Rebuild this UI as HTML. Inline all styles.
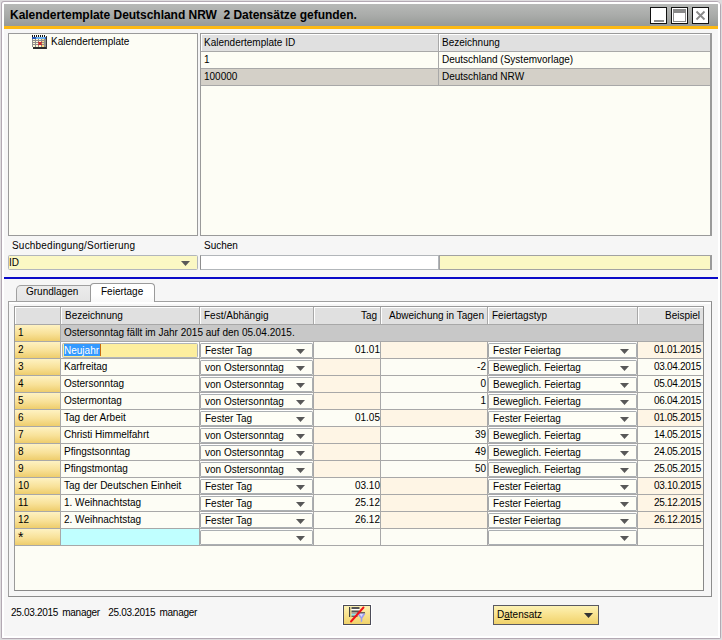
<!DOCTYPE html>
<html lang="de"><head><meta charset="utf-8"><title>Kalendertemplate Deutschland NRW</title>
<style>
html,body{margin:0;padding:0}
body{width:722px;height:640px;overflow:hidden;background:#fff;position:relative;
 font-family:"Liberation Sans",sans-serif;font-size:10px;line-height:17px;color:#000}
div,span{position:absolute;box-sizing:border-box;white-space:nowrap}
.t{height:17px}
.r{text-align:right}
.arr{width:9px;height:5px;background:#585858;clip-path:polygon(0 0,100% 0,50% 100%)}
.rn{left:15px;width:45px;height:16px;background:linear-gradient(#fef2c2,#f8e198 55%,#eecd6c);padding-left:3px;line-height:15px}
.hl{height:1px;background:#a8a8a8}
.vl{width:1px;background:#a8a8a8}
.cb{height:15px;background:#fefef6;border:1px solid #abafb2;border-left-color:#a6a8aa;border-radius:1.5px;box-shadow:0 -1px 0 #fff}
.pe{background:#fef5e5}
.hd{background:#e0e0e0;border-top:1px solid #fff;border-left:1px solid #fff;height:17px;line-height:15px}
.wb{width:17px;height:17px;top:7px;background:#fff;border:1px solid #111}
</style></head><body>

<div style="left:0;top:0;width:722px;height:640px;background:#dedcde"></div>
<div style="left:1px;top:1px;width:720px;height:638px;background:#b3a9b3;border-radius:3px 5px 2px 2px"></div>
<div style="left:2px;top:2px;width:718px;height:636px;background:#fff;border-radius:2px 3px 0 0"></div>
<div style="left:4px;top:4px;width:714px;height:632px;background:#f6f6f6"></div>
<div style="left:4px;top:4px;width:714px;height:22px;background:linear-gradient(#b7b9b7,#aaacaa 50%,#979a97)"></div>
<div style="left:4px;top:26px;width:714px;height:3px;background:#fdb913"></div>
<div style="left:10px;top:5px;height:20px;line-height:20px;font-size:12px;font-weight:bold;letter-spacing:-0.03px">Kalendertemplate Deutschland NRW&nbsp; 2 Datens&auml;tze gefunden.</div>
<div class="wb" style="left:650px"><div style="left:3px;top:12px;width:10px;height:2px;background:#8a8a8a"></div></div>
<div class="wb" style="left:671px"><div style="left:1px;top:1px;width:13px;height:13px;border:1px solid #8a8a8a;border-top:4px solid #8a8a8a;background:#fff"></div></div>
<div class="wb" style="left:692px"><svg style="position:absolute;left:0;top:0" width="15" height="15" viewBox="0 0 15 15"><path d="M3.5 3.5 L11.5 11.5 M11.5 3.5 L3.5 11.5" stroke="#8a8a8a" stroke-width="1.8" fill="none"/></svg></div>
<div style="left:8px;top:33px;width:190px;height:203px;background:#fdfdf5;border:1px solid #9a9a9a"></div>
<svg style="position:absolute;left:32px;top:35px" width="15" height="14" viewBox="0 0 15 14" shape-rendering="crispEdges">
<rect x="1" y="12" width="14" height="2" fill="#2c2c2c"/>
<rect x="14" y="1" width="1" height="13" fill="#3a3a3a"/>
<rect x="0" y="2" width="14" height="10" fill="#8e8e8e"/>
<rect x="0" y="2" width="4" height="2" fill="#2858b8"/>
<rect x="4" y="2" width="9" height="2" fill="#6cb0f0"/>
<rect x="13" y="2" width="1" height="2" fill="#3060c0"/>
<rect x="0" y="0" width="1" height="2" fill="#111"/><rect x="2" y="0" width="1" height="2" fill="#111"/><rect x="4" y="0" width="1" height="2" fill="#111"/><rect x="6" y="0" width="1" height="2" fill="#111"/><rect x="8" y="0" width="1" height="2" fill="#111"/><rect x="10" y="0" width="1" height="2" fill="#111"/><rect x="12" y="0" width="1" height="2" fill="#111"/>
<rect x="1" y="4" width="2" height="1" fill="#fff8d4"/><rect x="1" y="6" width="2" height="1" fill="#fff8d4"/><rect x="1" y="8" width="2" height="1" fill="#fff8d4"/><rect x="1" y="10" width="2" height="1.5" fill="#fff8d4"/><rect x="4" y="4" width="2" height="1" fill="#fff8d4"/><rect x="4" y="6" width="2" height="1" fill="#fff8d4"/><rect x="4" y="8" width="2" height="1" fill="#fff8d4"/><rect x="4" y="10" width="2" height="1.5" fill="#fff8d4"/><rect x="7" y="4" width="2" height="1" fill="#fff8d4"/><rect x="7" y="6" width="2" height="1" fill="#fff8d4"/><rect x="7" y="8" width="2" height="1" fill="#fff8d4"/><rect x="7" y="10" width="2" height="1.5" fill="#fff8d4"/><rect x="10" y="4" width="2" height="1" fill="#ffdf80"/><rect x="10" y="6" width="2" height="1" fill="#ffdf80"/><rect x="10" y="8" width="2" height="1" fill="#ffdf80"/><rect x="10" y="10" width="2" height="1.5" fill="#ffdf80"/>
<path d="M6.3 7L9.7 10M9.7 7L6.3 10" stroke="#d81818" stroke-width="1.1" shape-rendering="auto"/>
</svg>
<div class="t" style="left:51px;top:33px">Kalendertemplate</div>
<div style="left:200px;top:33px;width:512px;height:203px;background:#fdfdf5;border:1px solid #9a9a9a;border-right:2px solid #9a9a9a"></div>
<div class="hd" style="left:201px;top:34px;width:237px;padding-left:2px">Kalendertemplate ID</div>
<div class="hd" style="left:439px;top:34px;width:271px;padding-left:2px">Bezeichnung</div>
<div style="left:201px;top:69px;width:509px;height:16px;background:#d4d0c8"></div>
<div class="hl" style="left:201px;top:51px;width:509px"></div>
<div class="hl" style="left:201px;top:68px;width:509px"></div>
<div class="hl" style="left:201px;top:85px;width:509px"></div>
<div class="vl" style="left:438px;top:34px;height:52px"></div>
<div class="t" style="left:204px;top:51px">1</div>
<div class="t" style="left:442px;top:51px">Deutschland (Systemvorlage)</div>
<div class="t" style="left:204px;top:68px">100000</div>
<div class="t" style="left:442px;top:68px">Deutschland NRW</div>
<div class="t" style="left:12px;top:237px;letter-spacing:0.2px">Suchbedingung/Sortierung</div>
<div class="t" style="left:204px;top:237px">Suchen</div>
<div style="left:8px;top:255px;width:190px;height:15px;background:#fbf8c4;border:1px solid #b2b6bc;border-radius:1.5px"></div>
<div class="t" style="left:9px;top:254px">ID</div>
<div class="arr" style="left:181px;top:261px"></div>
<div style="left:200px;top:255px;width:239px;height:15px;background:#fff;border:1px solid #b2b6ba;border-left:1px solid #8e8e8e"></div>
<div style="left:439px;top:255px;width:273px;height:15px;background:#fbf8c4;border:1px solid #a2a2a2;border-right:2px solid #9a9a9a"></div>
<div style="left:4px;top:277px;width:714px;height:2px;background:#0a0ac8"></div>
<div style="left:8px;top:301px;width:704px;height:296px;background:#f6f6f6;border:1px solid #8c8c8c;border-top-color:#a0a0a0;border-left-color:#a0a0a0"></div>
<div style="left:9px;top:302px;width:702px;height:2px;background:#fff"></div>
<div style="left:16px;top:285px;width:75px;height:16px;background:linear-gradient(#ececec,#e4e4e4);border:1px solid #a0a0a0;border-bottom:none;border-radius:5px 0 0 0"></div>
<div class="t" style="left:26px;top:283px">Grundlagen</div>
<div style="left:90px;top:283px;width:65px;height:19px;background:linear-gradient(#fff 60%,#f8f8f8);border:1px solid #9a9a9a;border-bottom:none;border-radius:4px 4px 0 0"></div>
<div class="t" style="left:101px;top:283px">Feiertage</div>
<div style="left:14px;top:306px;width:690px;height:285px;background:#fdfdf5;border:1px solid #9a9a9a;border-right-color:#888;border-bottom-color:#888"></div>
<div class="hd" style="left:15px;top:307px;width:45px;padding-left:3px"></div>
<div class="hd" style="left:61px;top:307px;width:138px;padding-left:3px">Bezeichnung</div>
<div class="hd" style="left:200px;top:307px;width:113px;padding-left:3px">Fest/Abh&auml;ngig</div>
<div class="hd" style="left:314px;top:307px;width:66px;padding-right:3px;text-align:right">Tag</div>
<div class="hd" style="left:381px;top:307px;width:106px;padding-right:3px;text-align:right">Abweichung in Tagen</div>
<div class="hd" style="left:488px;top:307px;width:149px;padding-left:3px">Feiertagstyp</div>
<div class="hd" style="left:638px;top:307px;width:65px;padding-right:3px;text-align:right">Beispiel</div>
<div style="left:61px;top:325px;width:642px;height:16px;background:#c8c8c8"></div>
<div class="hl" style="left:15px;top:324px;width:688px"></div>
<div class="hl" style="left:15px;top:341px;width:688px"></div>
<div class="hl" style="left:15px;top:358px;width:688px"></div>
<div class="hl" style="left:15px;top:375px;width:688px"></div>
<div class="hl" style="left:15px;top:392px;width:688px"></div>
<div class="hl" style="left:15px;top:409px;width:688px"></div>
<div class="hl" style="left:15px;top:426px;width:688px"></div>
<div class="hl" style="left:15px;top:443px;width:688px"></div>
<div class="hl" style="left:15px;top:460px;width:688px"></div>
<div class="hl" style="left:15px;top:477px;width:688px"></div>
<div class="hl" style="left:15px;top:494px;width:688px"></div>
<div class="hl" style="left:15px;top:511px;width:688px"></div>
<div class="hl" style="left:15px;top:528px;width:688px"></div>
<div class="hl" style="left:15px;top:545px;width:688px"></div>
<div class="vl" style="left:60px;top:307px;height:239px"></div>
<div class="vl" style="left:199px;top:307px;height:18px"></div>
<div class="vl" style="left:199px;top:342px;height:204px"></div>
<div class="vl" style="left:313px;top:307px;height:18px"></div>
<div class="vl" style="left:313px;top:342px;height:204px"></div>
<div class="vl" style="left:380px;top:307px;height:18px"></div>
<div class="vl" style="left:380px;top:342px;height:204px"></div>
<div class="vl" style="left:487px;top:307px;height:18px"></div>
<div class="vl" style="left:487px;top:342px;height:204px"></div>
<div class="vl" style="left:637px;top:307px;height:18px"></div>
<div class="vl" style="left:637px;top:342px;height:204px"></div>
<div class="rn" style="top:325px">1</div>
<div class="t" style="left:64px;top:324px">Ostersonntag f&auml;llt im Jahr 2015 auf den 05.04.2015.</div>
<div class="rn" style="top:342px">2</div>
<div style="left:61px;top:342px;width:138px;height:16px;background:#fff"></div>
<div style="left:62px;top:343px;width:136px;height:15px;background:#fdee9e;border:1px solid #b0b4b8;border-radius:1.5px"></div>
<div style="left:64px;top:344px;width:37px;height:12px;background:#3399ff"></div>
<div style="left:100px;top:344px;width:1px;height:12px;background:#c86a10"></div>
<div class="t" style="left:64px;top:342px;color:#fff">Neujahr</div>
<div class="cb" style="left:200px;top:343px;width:113px"></div>
<div class="t" style="left:205px;top:342px">Fester Tag</div>
<div class="arr" style="left:296px;top:349px"></div>
<div class="t r" style="left:314px;width:66px;top:341px">01.01</div>
<div class="pe" style="left:381px;top:342px;width:106px;height:16px"></div>
<div class="cb" style="left:488px;top:343px;width:149px"></div>
<div class="t" style="left:493px;top:342px">Fester Feiertag</div>
<div class="arr" style="left:620px;top:349px"></div>
<div class="pe" style="left:638px;top:342px;width:65px;height:16px"></div>
<div class="t r" style="left:638px;width:63px;top:341px;letter-spacing:-0.3px">01.01.2015</div>
<div class="rn" style="top:359px">3</div>
<div class="t" style="left:64px;top:358px">Karfreitag</div>
<div class="cb" style="left:200px;top:360px;width:113px"></div>
<div class="t" style="left:205px;top:359px">von Ostersonntag</div>
<div class="arr" style="left:296px;top:366px"></div>
<div class="pe" style="left:314px;top:359px;width:66px;height:16px"></div>
<div class="t r" style="left:381px;width:105px;top:358px">-2</div>
<div class="cb" style="left:488px;top:360px;width:149px"></div>
<div class="t" style="left:493px;top:359px">Beweglich. Feiertag</div>
<div class="arr" style="left:620px;top:366px"></div>
<div class="t r" style="left:638px;width:63px;top:358px;letter-spacing:-0.3px">03.04.2015</div>
<div class="rn" style="top:376px">4</div>
<div class="t" style="left:64px;top:375px">Ostersonntag</div>
<div class="cb" style="left:200px;top:377px;width:113px"></div>
<div class="t" style="left:205px;top:376px">von Ostersonntag</div>
<div class="arr" style="left:296px;top:383px"></div>
<div class="pe" style="left:314px;top:376px;width:66px;height:16px"></div>
<div class="t r" style="left:381px;width:105px;top:375px">0</div>
<div class="cb" style="left:488px;top:377px;width:149px"></div>
<div class="t" style="left:493px;top:376px">Beweglich. Feiertag</div>
<div class="arr" style="left:620px;top:383px"></div>
<div class="t r" style="left:638px;width:63px;top:375px;letter-spacing:-0.3px">05.04.2015</div>
<div class="rn" style="top:393px">5</div>
<div class="t" style="left:64px;top:392px">Ostermontag</div>
<div class="cb" style="left:200px;top:394px;width:113px"></div>
<div class="t" style="left:205px;top:393px">von Ostersonntag</div>
<div class="arr" style="left:296px;top:400px"></div>
<div class="pe" style="left:314px;top:393px;width:66px;height:16px"></div>
<div class="t r" style="left:381px;width:105px;top:392px">1</div>
<div class="cb" style="left:488px;top:394px;width:149px"></div>
<div class="t" style="left:493px;top:393px">Beweglich. Feiertag</div>
<div class="arr" style="left:620px;top:400px"></div>
<div class="t r" style="left:638px;width:63px;top:392px;letter-spacing:-0.3px">06.04.2015</div>
<div class="rn" style="top:410px">6</div>
<div class="t" style="left:64px;top:409px">Tag der Arbeit</div>
<div class="cb" style="left:200px;top:411px;width:113px"></div>
<div class="t" style="left:205px;top:410px">Fester Tag</div>
<div class="arr" style="left:296px;top:417px"></div>
<div class="t r" style="left:314px;width:66px;top:409px">01.05</div>
<div class="pe" style="left:381px;top:410px;width:106px;height:16px"></div>
<div class="cb" style="left:488px;top:411px;width:149px"></div>
<div class="t" style="left:493px;top:410px">Fester Feiertag</div>
<div class="arr" style="left:620px;top:417px"></div>
<div class="pe" style="left:638px;top:410px;width:65px;height:16px"></div>
<div class="t r" style="left:638px;width:63px;top:409px;letter-spacing:-0.3px">01.05.2015</div>
<div class="rn" style="top:427px">7</div>
<div class="t" style="left:64px;top:426px">Christi Himmelfahrt</div>
<div class="cb" style="left:200px;top:428px;width:113px"></div>
<div class="t" style="left:205px;top:427px">von Ostersonntag</div>
<div class="arr" style="left:296px;top:434px"></div>
<div class="pe" style="left:314px;top:427px;width:66px;height:16px"></div>
<div class="t r" style="left:381px;width:105px;top:426px">39</div>
<div class="cb" style="left:488px;top:428px;width:149px"></div>
<div class="t" style="left:493px;top:427px">Beweglich. Feiertag</div>
<div class="arr" style="left:620px;top:434px"></div>
<div class="t r" style="left:638px;width:63px;top:426px;letter-spacing:-0.3px">14.05.2015</div>
<div class="rn" style="top:444px">8</div>
<div class="t" style="left:64px;top:443px">Pfingstsonntag</div>
<div class="cb" style="left:200px;top:445px;width:113px"></div>
<div class="t" style="left:205px;top:444px">von Ostersonntag</div>
<div class="arr" style="left:296px;top:451px"></div>
<div class="pe" style="left:314px;top:444px;width:66px;height:16px"></div>
<div class="t r" style="left:381px;width:105px;top:443px">49</div>
<div class="cb" style="left:488px;top:445px;width:149px"></div>
<div class="t" style="left:493px;top:444px">Beweglich. Feiertag</div>
<div class="arr" style="left:620px;top:451px"></div>
<div class="t r" style="left:638px;width:63px;top:443px;letter-spacing:-0.3px">24.05.2015</div>
<div class="rn" style="top:461px">9</div>
<div class="t" style="left:64px;top:460px">Pfingstmontag</div>
<div class="cb" style="left:200px;top:462px;width:113px"></div>
<div class="t" style="left:205px;top:461px">von Ostersonntag</div>
<div class="arr" style="left:296px;top:468px"></div>
<div class="pe" style="left:314px;top:461px;width:66px;height:16px"></div>
<div class="t r" style="left:381px;width:105px;top:460px">50</div>
<div class="cb" style="left:488px;top:462px;width:149px"></div>
<div class="t" style="left:493px;top:461px">Beweglich. Feiertag</div>
<div class="arr" style="left:620px;top:468px"></div>
<div class="t r" style="left:638px;width:63px;top:460px;letter-spacing:-0.3px">25.05.2015</div>
<div class="rn" style="top:478px">10</div>
<div class="t" style="left:64px;top:477px">Tag der Deutschen Einheit</div>
<div class="cb" style="left:200px;top:479px;width:113px"></div>
<div class="t" style="left:205px;top:478px">Fester Tag</div>
<div class="arr" style="left:296px;top:485px"></div>
<div class="t r" style="left:314px;width:66px;top:477px">03.10</div>
<div class="pe" style="left:381px;top:478px;width:106px;height:16px"></div>
<div class="cb" style="left:488px;top:479px;width:149px"></div>
<div class="t" style="left:493px;top:478px">Fester Feiertag</div>
<div class="arr" style="left:620px;top:485px"></div>
<div class="pe" style="left:638px;top:478px;width:65px;height:16px"></div>
<div class="t r" style="left:638px;width:63px;top:477px;letter-spacing:-0.3px">03.10.2015</div>
<div class="rn" style="top:495px">11</div>
<div class="t" style="left:64px;top:494px">1. Weihnachtstag</div>
<div class="cb" style="left:200px;top:496px;width:113px"></div>
<div class="t" style="left:205px;top:495px">Fester Tag</div>
<div class="arr" style="left:296px;top:502px"></div>
<div class="t r" style="left:314px;width:66px;top:494px">25.12</div>
<div class="pe" style="left:381px;top:495px;width:106px;height:16px"></div>
<div class="cb" style="left:488px;top:496px;width:149px"></div>
<div class="t" style="left:493px;top:495px">Fester Feiertag</div>
<div class="arr" style="left:620px;top:502px"></div>
<div class="pe" style="left:638px;top:495px;width:65px;height:16px"></div>
<div class="t r" style="left:638px;width:63px;top:494px;letter-spacing:-0.3px">25.12.2015</div>
<div class="rn" style="top:512px">12</div>
<div class="t" style="left:64px;top:511px">2. Weihnachtstag</div>
<div class="cb" style="left:200px;top:513px;width:113px"></div>
<div class="t" style="left:205px;top:512px">Fester Tag</div>
<div class="arr" style="left:296px;top:519px"></div>
<div class="t r" style="left:314px;width:66px;top:511px">26.12</div>
<div class="pe" style="left:381px;top:512px;width:106px;height:16px"></div>
<div class="cb" style="left:488px;top:513px;width:149px"></div>
<div class="t" style="left:493px;top:512px">Fester Feiertag</div>
<div class="arr" style="left:620px;top:519px"></div>
<div class="pe" style="left:638px;top:512px;width:65px;height:16px"></div>
<div class="t r" style="left:638px;width:63px;top:511px;letter-spacing:-0.3px">26.12.2015</div>
<div class="rn" style="top:529px"><span style="left:3px;top:1px;font-size:14px;line-height:14px">*</span></div>
<div style="left:61px;top:529px;width:138px;height:16px;background:#c0ffff"></div>
<div class="cb" style="left:200px;top:530px;width:113px"></div>
<div class="arr" style="left:296px;top:536px"></div>
<div class="cb" style="left:488px;top:530px;width:149px"></div>
<div class="arr" style="left:620px;top:536px"></div>
<div class="t" style="left:11px;top:604px;letter-spacing:-0.3px;word-spacing:1.8px">25.03.2015 manager&nbsp; 25.03.2015 manager</div>
<div style="left:342px;top:604px;width:30px;height:22px;background:#fff"></div>
<div style="left:343px;top:605px;width:28px;height:20px;background:linear-gradient(#fdf2b4,#f8e28e 50%,#f0d26a);border:1px solid #4c4c58"></div>
<svg style="position:absolute;left:343px;top:605px" width="28" height="20" viewBox="0 0 28 20">
<rect x="6" y="2" width="1.2" height="10" fill="#444"/>
<rect x="8.5" y="2" width="8" height="2" fill="#555"/>
<rect x="8.5" y="4" width="8" height="1.5" fill="#fff"/>
<rect x="8.5" y="5.5" width="8" height="2" fill="#555"/>
<rect x="8.5" y="7.5" width="8" height="1.5" fill="#aaa"/>
<rect x="8.5" y="9" width="4" height="1.6" fill="#7ee8f0"/>
<rect x="8.5" y="10.6" width="6" height="1.4" fill="#666"/>
<rect x="14.5" y="7.2" width="7.5" height="1.3" fill="#444"/>
<path d="M14 8.5H22.5L19.3 13.5V16.2L17.8 17.5V13.5Z" fill="#9c9cf0"/>
<path d="M16.5 9H20L18.5 12Z" fill="#dcdcff"/>
<path d="M8 16.5L20.5 2.5" stroke="#f01018" stroke-width="1.9" stroke-linecap="round"/>
</svg>
<div style="left:493px;top:605px;width:106px;height:20px;background:linear-gradient(#fdf2b4,#f8e28e 50%,#f0d26a);border:1px solid #5a5a62"></div>
<div class="t" style="left:497px;top:606px">D<span style="position:static;text-decoration:underline">a</span>tensatz</div>
<div class="arr" style="left:584px;top:613px;background:#333"></div>
</body></html>
